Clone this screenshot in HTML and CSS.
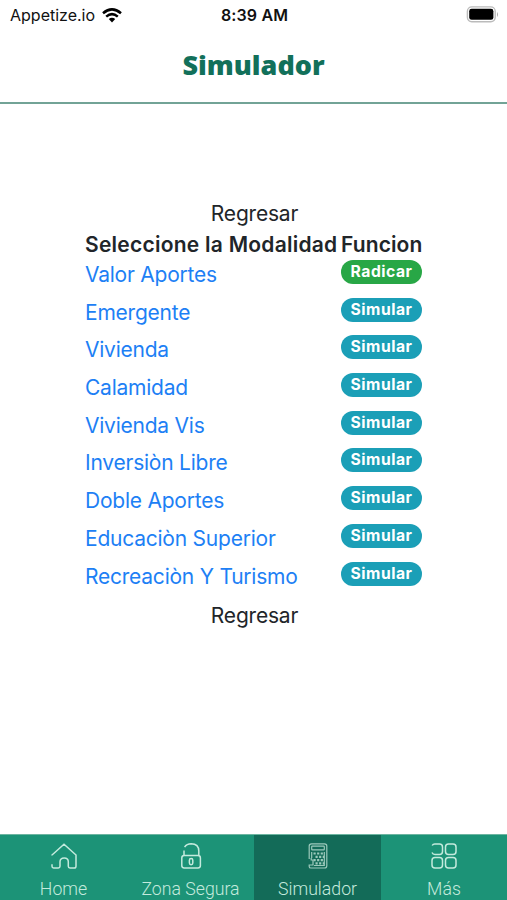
FILE: index.html
```html
<!DOCTYPE html>
<html lang="es">
<head>
<meta charset="utf-8">
<title>Simulador</title>
<link rel="stylesheet" href="styles.css">
</head>
<body>
<div class="screen">
  <div class="status">
    <div class="carrier"><span>Appetize.io</span>
      <svg class="wifi" viewBox="0 0 20 15" width="20" height="15" fill="none" stroke="#000" stroke-width="2.5"><path d="M1 5.2Q10-2.5 19 5.2M4.2 8.6Q10 3.6 15.8 8.6"/><path d="M6.8 11.1Q10 8.3 13.2 11.1L10 14.5Z" fill="#000" stroke="none"/></svg>
    </div>
    <span class="clock">8:39 AM</span>
    <svg class="battery" viewBox="0 0 33 17" width="33" height="17"><rect x="1.4" y=".9" width="27.8" height="14.8" rx="4.4" fill="none" stroke="#bbb" stroke-width="1.4"/><rect x="3.2" y="2.8" width="24.2" height="11" rx="2.4"/><path d="M31 6q2 2.5 0 5z" fill="#aaa"/></svg>
  </div>
  <header class="header"><h1>Simulador</h1></header>
  <main class="content">
    <a class="back">Regresar</a>
    <table class="modes">
      <thead><tr><th class="mode-head">Seleccione la Modalidad</th><th class="func-head">Funcion</th></tr></thead>
      <tbody>
        <tr><td><a>Valor Aportes</a></td><td><span class="badge success">Radicar</span></td></tr>
        <tr><td><a>Emergente</a></td><td><span class="badge">Simular</span></td></tr>
        <tr><td><a>Vivienda</a></td><td><span class="badge">Simular</span></td></tr>
        <tr><td><a>Calamidad</a></td><td><span class="badge">Simular</span></td></tr>
        <tr><td><a>Vivienda Vis</a></td><td><span class="badge">Simular</span></td></tr>
        <tr><td><a>Inversiòn Libre</a></td><td><span class="badge">Simular</span></td></tr>
        <tr><td><a>Doble Aportes</a></td><td><span class="badge">Simular</span></td></tr>
        <tr><td><a>Educaciòn Superior</a></td><td><span class="badge">Simular</span></td></tr>
        <tr><td><a>Recreaciòn Y Turismo</a></td><td><span class="badge">Simular</span></td></tr>
      </tbody>
    </table>
    <a class="back">Regresar</a>
  </main>
  <nav class="tabs">
    <a class="tab">
      <svg viewBox="0 0 30 30"><path d="M3 14.6V14L15 3.2 27 14V25.2Q27 27 25.2 27H21Q19.3 27 19.3 25.3V20.8Q19.3 17 15.2 17T11 20.8V25.3Q11 27 9.3 27H4.6Q3 27 3 25.3V23.2"/></svg>
      <span>Home</span></a>
    <a class="tab">
      <svg viewBox="0 0 30 30"><path d="M8 9.6V14.5M8.6 6.2Q10.6 2.8 15.2 2.8 22.8 3 22.8 10V14.5"/><rect x="5.8" y="14.5" width="18.6" height="12.5" rx="2.4"/><rect x="13.4" y="17.6" width="3.4" height="6.2" rx="1.7"/></svg>
      <span>Zona Segura</span></a>
    <a class="tab active">
      <svg class="calc" viewBox="0 0 30 30"><path d="M6.2 18V5Q6.2 2.8 8.5 2.8H21.5Q23.8 2.8 23.8 5V24.7Q23.8 27 21.5 27H8Q6.2 27 6.2 25.4V24H10V19H8.2V17"/><rect x="8.7" y="5.2" width="12.6" height="3.6" rx=".6"/><path d="M8.7 17V11M21.3 11V24.5H11"/><path class="keys" d="M10.5 12.5H21M12.5 15.8H21M10.5 19.1H21M12.5 22.4H21"/></svg>
      <span>Simulador</span></a>
    <a class="tab">
      <svg viewBox="0 0 30 30"><path d="M3.2 4.5Q4 3 5.8 3H10.5Q13.5 3 13.5 6V10.5Q13.5 13.5 10.5 13.5H6Q3.8 13.5 3 11.5"/><rect x="16.5" y="3" width="10.5" height="10.5" rx="3"/><rect x="3" y="16.5" width="10.5" height="10.5" rx="3"/><rect x="16.5" y="16.5" width="10.5" height="10.5" rx="3"/></svg>
      <span>Más</span></a>
  </nav>
</div>
</body>
</html>
```
FILE: styles.css
```css
* { box-sizing: border-box; }
body { margin: 0; background: #fff; font-family: Inter, "Liberation Sans", sans-serif; color: #212529; }
.screen { height: 900px; display: flex; flex-direction: column; overflow: hidden; }
.status { height: 30px; flex: none; display: grid; grid-template-columns: 1fr auto 1fr; align-items: center; padding: 0 8px 0 10px; color: #111; }
.carrier { display: flex; align-items: center; gap: 7px; font-size: 16px; }
.clock { font-size: 16px; font-weight: 600; letter-spacing: .15px; }
.battery { justify-self: end; margin-bottom: 2px; }
.header { height: 74px; flex: none; border-bottom: 2px solid #72a396; padding-bottom: 2px; display: flex; justify-content: center; align-items: center; }
h1 { margin: 0; font: 800 27px/36px "Open Sans", sans-serif; color: #12705a; }
.content { flex: 1; display: flex; flex-direction: column; align-items: center; padding-top: 94px; }
.back { font-size: 21px; line-height: 32px; letter-spacing: -.2px; padding-left: 2px; }
.modes { border-collapse: collapse; table-layout: fixed; width: 337px; margin: 0 0 1px; font-size: 21px; letter-spacing: -.23px; }
.modes th, .modes td { padding: 0; text-align: left; white-space: nowrap; vertical-align: top; }
.modes th { height: 29px; line-height: 30px; font-weight: 600; letter-spacing: .25px; }
.modes .func-head { letter-spacing: .1px; }
.mode-head { width: 256px; }
.modes td { height: 37.7px; line-height: 30px; }
.modes a { color: #1d80f5; }
.badge { display: block; width: 81px; height: 24px; border-radius: 12px; background: #1b9fb7; color: #fff; text-align: center; font-size: 15.7px; letter-spacing: .5px; font-weight: 700; line-height: 24px; }
.badge.success { background: #28a746; }
.tabs { height: 66px; flex: none; display: grid; grid-template-columns: 127px 127px 127px 126px; border-top: 1px solid #6db5a1; background: #1c9377; }
.tab { display: flex; flex-direction: column; align-items: center; padding-top: 6px; font: 300 17.7px/22px Roboto, sans-serif; color: #c4eadd; }
.tab.active { background: #136b58; }
.tab svg { width: 30px; height: 30px; margin-bottom: 7px; fill: none; stroke: #c4eadd; stroke-width: 1.5; }
.tab .calc { stroke: #9cc9bb; stroke-width: 1.2; }
.calc .keys { stroke-width: 2.2; stroke-dasharray: 2.2 1.4; }
```
